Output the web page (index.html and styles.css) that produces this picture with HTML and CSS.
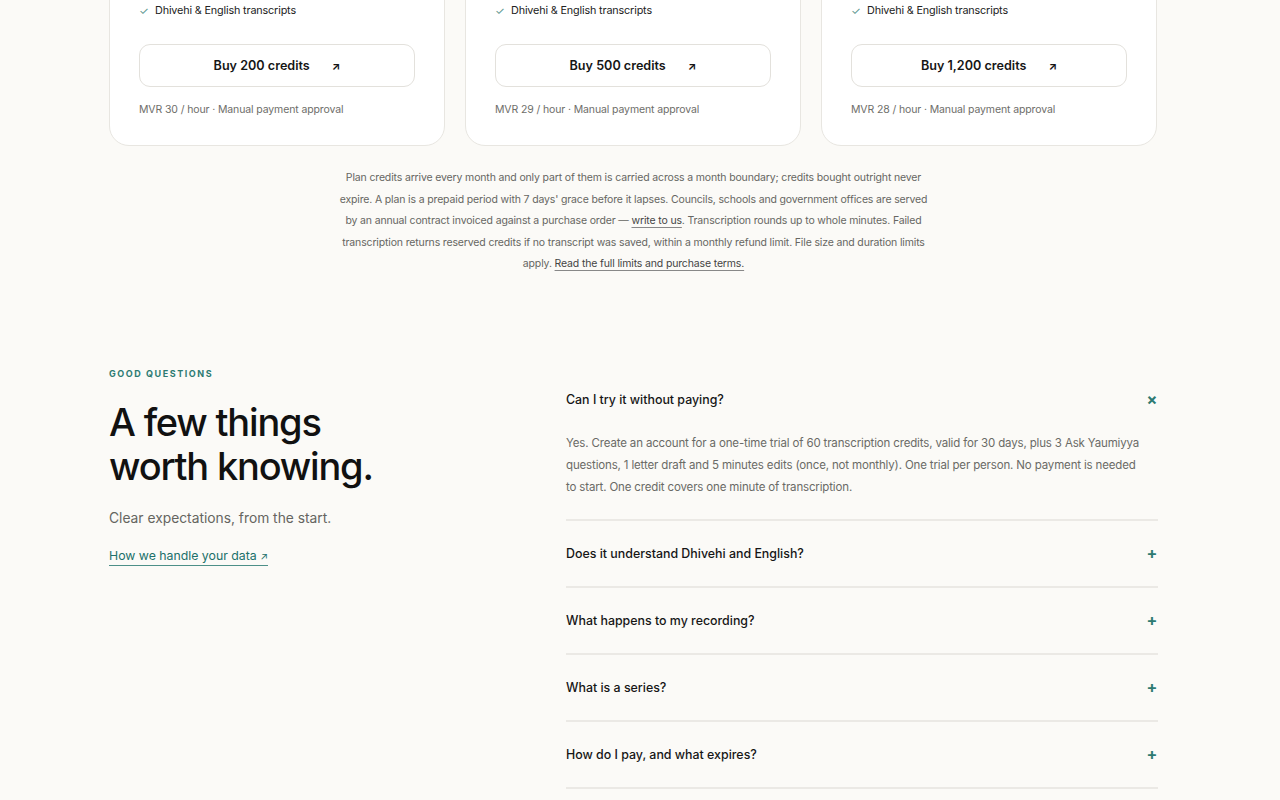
FILE: index.html
```html
<!DOCTYPE html>
<html lang="en">
<head>
<meta charset="utf-8">
<title>Pricing &amp; FAQ</title>
<link rel="stylesheet" href="styles.css">
</head>
<body>
<main class="page">
  <section class="cards">
    <article class="card">
      <p class="feature"><span class="check">✓</span>Dhivehi &amp; English transcripts</p>
      <a class="buy" href="#"><span>Buy 200 credits</span><span class="arrow">↗</span></a>
      <p class="meta">MVR 30 / hour · Manual payment approval</p>
    </article>
    <article class="card">
      <p class="feature"><span class="check">✓</span>Dhivehi &amp; English transcripts</p>
      <a class="buy" href="#"><span>Buy 500 credits</span><span class="arrow">↗</span></a>
      <p class="meta">MVR 29 / hour · Manual payment approval</p>
    </article>
    <article class="card">
      <p class="feature"><span class="check">✓</span>Dhivehi &amp; English transcripts</p>
      <a class="buy" href="#"><span>Buy 1,200 credits</span><span class="arrow">↗</span></a>
      <p class="meta">MVR 28 / hour · Manual payment approval</p>
    </article>
  </section>

  <p class="note">Plan credits arrive every month and only part of them is carried across a month boundary; credits bought outright never expire. A plan is a prepaid period with 7 days' grace before it lapses. Councils, schools and government offices are served by an annual contract invoiced against a purchase order — <a href="#">write to us</a>. Transcription rounds up to whole minutes. Failed transcription returns reserved credits if no transcript was saved, within a monthly refund limit. File size and duration limits apply. <a href="#">Read the full limits and purchase terms.</a></p>

  <section class="faq">
    <div class="faq-intro">
      <p class="eyebrow">GOOD QUESTIONS</p>
      <h2 class="title">A few things<br>worth knowing.</h2>
      <p class="sub">Clear expectations, from the start.</p>
      <a class="data-link" href="#">How we handle your data <span class="small-arrow">↗</span></a>
    </div>
    <div class="faq-list">
      <div class="item open">
        <div class="q"><span>Can I try it without paying?</span><span class="icon">×</span></div>
        <p class="a">Yes. Create an account for a one-time trial of 60 transcription credits, valid for 30 days, plus 3 Ask Yaumiyya questions, 1 letter draft and 5 minutes edits (once, not monthly). One trial per person. No payment is needed to start. One credit covers one minute of transcription.</p>
      </div>
      <div class="item">
        <div class="q"><span>Does it understand Dhivehi and English?</span><span class="icon">+</span></div>
      </div>
      <div class="item">
        <div class="q"><span>What happens to my recording?</span><span class="icon">+</span></div>
      </div>
      <div class="item">
        <div class="q"><span>What is a series?</span><span class="icon">+</span></div>
      </div>
      <div class="item">
        <div class="q"><span>How do I pay, and what expires?</span><span class="icon">+</span></div>
      </div>
    </div>
  </section>
</main>
</body>
</html>
```

FILE: styles.css
```css
* { box-sizing: border-box; }
html, body { margin: 0; padding: 0; }
body {
  background: #fbfaf7;
  font-family: Inter, "Noto Sans", "Liberation Sans", sans-serif;
  color: #1a1a1a;
  overflow: hidden;
  height: 800px;
}
.page {
  width: 1049px;
  margin-left: 109px;
}
.cards {
  display: grid;
  grid-template-columns: repeat(3, 336px);
  column-gap: 20px;
  margin-top: -30px;
}
.card {
  background: #fff;
  border: 1px solid #e8e6e1;
  border-radius: 20px;
  padding: 30px 29px 27px;
}
.feature {
  margin: 0;
  font-size: 10.8px;
  letter-spacing: -0.15px;
  line-height: 20px;
  color: #222;
  display: flex;
  align-items: center;
}
.check {
  color: #5a948d;
  width: 16px;
  font-size: 11px;
}
.buy {
  margin-top: 23px;
  height: 43px;
  border: 1px solid #e3e1dc;
  border-radius: 11px;
  background: #fff;
  display: flex;
  align-items: center;
  justify-content: center;
  gap: 22px;
  font-size: 12.6px;
  font-weight: 600;
  color: #161616;
  text-decoration: none;
}
.arrow { font-size: 11px; font-weight: 700; }
.meta {
  margin: 15px 0 0;
  font-size: 10.5px;
  letter-spacing: -0.12px;
  line-height: 16px;
  color: #6e6e6a;
}
.note {
  width: 600px;
  margin: 21px auto 0;
  text-align: center;
  font-size: 10.5px;
  letter-spacing: -0.15px;
  line-height: 21.5px;
  color: #666662;
}
.note a {
  color: #444;
  text-decoration: underline;
  text-decoration-color: #888;
  text-underline-offset: 3px;
}
.faq {
  display: grid;
  grid-template-columns: 457px 592px;
  margin-top: 92px;
}
.eyebrow {
  margin: 0;
  padding-top: 1px;
  font-size: 9px;
  line-height: 12px;
  font-weight: 700;
  letter-spacing: 1.55px;
  color: #2d7a72;
}
.title {
  margin: 20px 0 0;
  font-size: 38px;
  line-height: 44px;
  font-weight: 500;
  letter-spacing: -1.2px;
  color: #111;
}
.sub {
  margin: 20px 0 0;
  font-size: 13.8px;
  line-height: 20px;
  color: #65655f;
}
.data-link {
  display: inline-block;
  margin-top: 19px;
  font-size: 12.3px;
  line-height: 17px;
  color: #20706a;
  text-decoration: none;
  border-bottom: 1.5px solid #4d8f88;
}
.small-arrow { font-size: 10px; }
.item {
  border-bottom: 2px solid #ebe9e5;
  padding: 24px 0;
}
.item.open { padding-bottom: 21px; }
.q {
  display: flex;
  justify-content: space-between;
  align-items: center;
  font-size: 12.4px;
  line-height: 17px;
  font-weight: 500;
  color: #161616;
}
.icon {
  color: #2d7a72;
  font-weight: 700;
  font-size: 16px;
  width: 12px;
  text-align: center;
  margin-right: 0;
}
.a {
  margin: 24px 0 0;
  padding-right: 14px;
  font-size: 11.5px;
  letter-spacing: -0.15px;
  line-height: 22px;
  color: #6a6a66;
}
```
